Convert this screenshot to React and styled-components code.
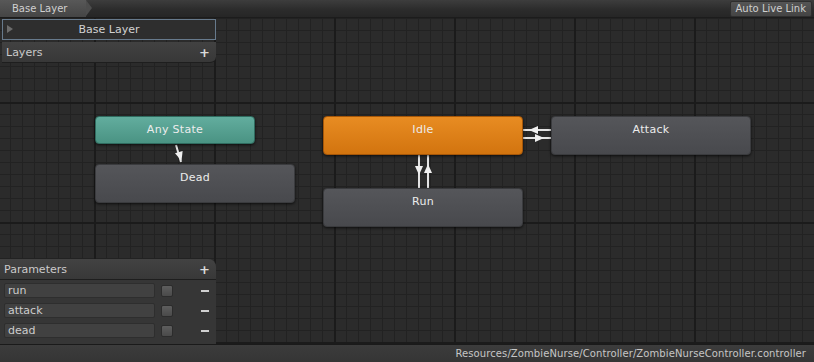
import React from "react";
import styled, { createGlobalStyle } from "styled-components";

const Global = createGlobalStyle`
  html, body { margin: 0; padding: 0; background: #282828; }
  * { box-sizing: border-box; }
`;

const Root = styled.div`
  width: 814px;
  height: 362px;
  display: flex;
  flex-direction: column;
  font-family: "DejaVu Sans", "Liberation Sans", sans-serif;
  font-size: 10px;
  color: #c4c4c4;
  overflow: hidden;
`;

const TopBar = styled.div`
  height: 18px;
  flex: none;
  display: flex;
  align-items: center;
  justify-content: space-between;
  background: linear-gradient(#3d3d3d, #2c2c2c 55%, #262626);
  border-bottom: 1px solid #1c1c1c;
`;

const Crumb = styled.div`
  position: relative;
  height: 17px;
  display: flex;
  align-items: center;
  padding: 0 0 0 12px;
  width: 86px;
  background: linear-gradient(#585858, #454545);
  color: #d0d0d0;
  &::after {
    content: "";
    position: absolute;
    right: -6px;
    top: 0;
    border-left: 6px solid #4d4d4d;
    border-top: 8.5px solid transparent;
    border-bottom: 8.5px solid transparent;
  }
`;

const LiveLink = styled.div`
  height: 16px;
  margin-right: 2px;
  padding: 0 5px;
  display: flex;
  align-items: center;
  background: linear-gradient(#555, #444);
  border: 1px solid #2e2e2e;
  border-radius: 2px;
  color: #cfcfcf;
`;

const Canvas = styled.div`
  position: relative;
  flex: 1;
  background-color: #2b2b2b;
  background-image:
    linear-gradient(to right, #1b1b1b 2px, transparent 2px),
    linear-gradient(to bottom, #1b1b1b 2px, transparent 2px),
    linear-gradient(to right, #222 1px, transparent 1px),
    linear-gradient(to bottom, #222 1px, transparent 1px);
  background-size: 120px 120px, 120px 120px, 12px 12px, 12px 12px;
  background-position: 94px 84px;
`;

const Edges = styled.svg`
  position: absolute;
  inset: 0;
  width: 100%;
  height: 100%;
`;

const colours = {
  gray: ["#55565a", "#48494d", "#3a3b3e"],
  teal: ["#62ad9e", "#4a9383", "#2f6b5f"],
  orange: ["#e88c22", "#d2740f", "#a55608"],
};

const Node = styled.div`
  position: absolute;
  left: ${(p) => p.x}px;
  top: ${(p) => p.y}px;
  width: ${(p) => p.w}px;
  height: ${(p) => p.h}px;
  display: flex;
  align-items: flex-start;
  justify-content: center;
  line-height: 26px;
  border-radius: 4px;
  background: linear-gradient(${(p) => colours[p.kind][0]}, ${(p) => colours[p.kind][1]});
  border: 1px solid ${(p) => colours[p.kind][2]};
  box-shadow: 0 1px 3px rgba(0, 0, 0, 0.7);
  color: #ececec;
  font-size: 11px;
  letter-spacing: 0.3px;
`;

const LayersPanel = styled.div`
  position: absolute;
  left: 2px;
  top: 1px;
  width: 214px;
  display: flex;
  flex-direction: column;
  gap: 2px;
`;

const LayerRow = styled.div`
  position: relative;
  height: 21px;
  display: flex;
  align-items: center;
  justify-content: center;
  background: #2e2e2e;
  border: 1px solid #677a8c;
  color: #d2d2d2;
  font-size: 11px;
  &::before {
    content: "";
    position: absolute;
    left: 4px;
    top: 5px;
    border-left: 6px solid #6c6c6c;
    border-top: 4px solid transparent;
    border-bottom: 4px solid transparent;
  }
`;

const PanelHeader = styled.div`
  height: 21px;
  display: flex;
  align-items: center;
  justify-content: space-between;
  padding: 1px 4px 0 4px;
  background: linear-gradient(#424242, #383838);
  border-radius: ${(p) => p.radius};
  border-bottom: 1px solid #1e1e1e;
  color: #cacaca;
  font-size: 11px;
`;

const Plus = styled.span`
  font-weight: bold;
  font-size: 13px;
  color: #dadada;
  margin-right: 2px;
`;

const ParamsPanel = styled.div`
  position: absolute;
  left: 0;
  bottom: 0;
  width: 216px;
  display: flex;
  flex-direction: column;
  background: #333;
  border-top-right-radius: 8px;
`;

const ParamList = styled.div`
  display: flex;
  flex-direction: column;
  gap: 5px;
  padding: 3px 0 6px 4px;
  background: #363636;
`;

const ParamRow = styled.div`
  display: flex;
  align-items: center;
  height: 15px;
`;

const Field = styled.div`
  width: 151px;
  height: 15px;
  display: flex;
  align-items: center;
  padding-left: 3px;
  background: #414141;
  border: 1px solid #2e2e2e;
  border-radius: 2px;
  color: #cdcdcd;
  font-size: 11px;
`;

const Check = styled.div`
  width: 12px;
  height: 12px;
  margin-left: 6px;
  background: linear-gradient(#5e5e5e, #4a4a4a);
  border: 1px solid #2c2c2c;
  border-radius: 2px;
`;

const Minus = styled.div`
  width: 8px;
  height: 2px;
  margin-left: 28px;
  background: #d0d0d0;
`;

const StatusBar = styled.div`
  height: 18px;
  flex: none;
  display: flex;
  align-items: center;
  justify-content: flex-end;
  padding-right: 8px;
  background: linear-gradient(#3c3c3c, #353535);
  border-top: 1px solid #1a1a1a;
  color: #c6c6c6;
  font-size: 10px;
  letter-spacing: 0.1px;
`;

const params = ["run", "attack", "dead"];

const Arrow = ({ x, y, angle }) => (
  <polygon
    points="0,-5 4,4 -4,4"
    fill="#f0f0f0"
    transform={`translate(${x} ${y}) rotate(${angle})`}
  />
);

export default function App() {
  return (
    <Root>
      <Global />
      <TopBar>
        <Crumb>Base Layer</Crumb>
        <LiveLink>Auto Live Link</LiveLink>
      </TopBar>
      <Canvas>
        <Edges>
          <g stroke="#e4e4e4" strokeWidth="2">
            <line x1="176" y1="127" x2="181" y2="144" />
            <line x1="419" y1="137" x2="419" y2="170" />
            <line x1="428" y1="137" x2="428" y2="170" />
            <line x1="523" y1="112" x2="551" y2="112" />
            <line x1="523" y1="120" x2="551" y2="120" />
          </g>
          <Arrow x={180} y={138} angle={163} />
          <Arrow x={419} y={152} angle={180} />
          <Arrow x={428} y={151} angle={0} />
          <Arrow x={534} y={112} angle={-90} />
          <Arrow x={539} y={120} angle={90} />
        </Edges>
        <Node kind="teal" x={95} y={98} w={160} h={28}>Any State</Node>
        <Node kind="gray" x={95} y={146} w={200} h={39}>Dead</Node>
        <Node kind="orange" x={323} y={98} w={200} h={39}>Idle</Node>
        <Node kind="gray" x={551} y={98} w={200} h={39}>Attack</Node>
        <Node kind="gray" x={323} y={170} w={200} h={39}>Run</Node>
        <LayersPanel>
          <LayerRow>Base Layer</LayerRow>
          <PanelHeader radius="0 0 6px 0">
            Layers <Plus>+</Plus>
          </PanelHeader>
        </LayersPanel>
        <ParamsPanel>
          <PanelHeader radius="0 8px 0 0">
            Parameters <Plus>+</Plus>
          </PanelHeader>
          <ParamList>
            {params.map((p) => (
              <ParamRow key={p}>
                <Field>{p}</Field>
                <Check />
                <Minus />
              </ParamRow>
            ))}
          </ParamList>
        </ParamsPanel>
      </Canvas>
      <StatusBar>Resources/ZombieNurse/Controller/ZombieNurseController.controller</StatusBar>
    </Root>
  );
}
